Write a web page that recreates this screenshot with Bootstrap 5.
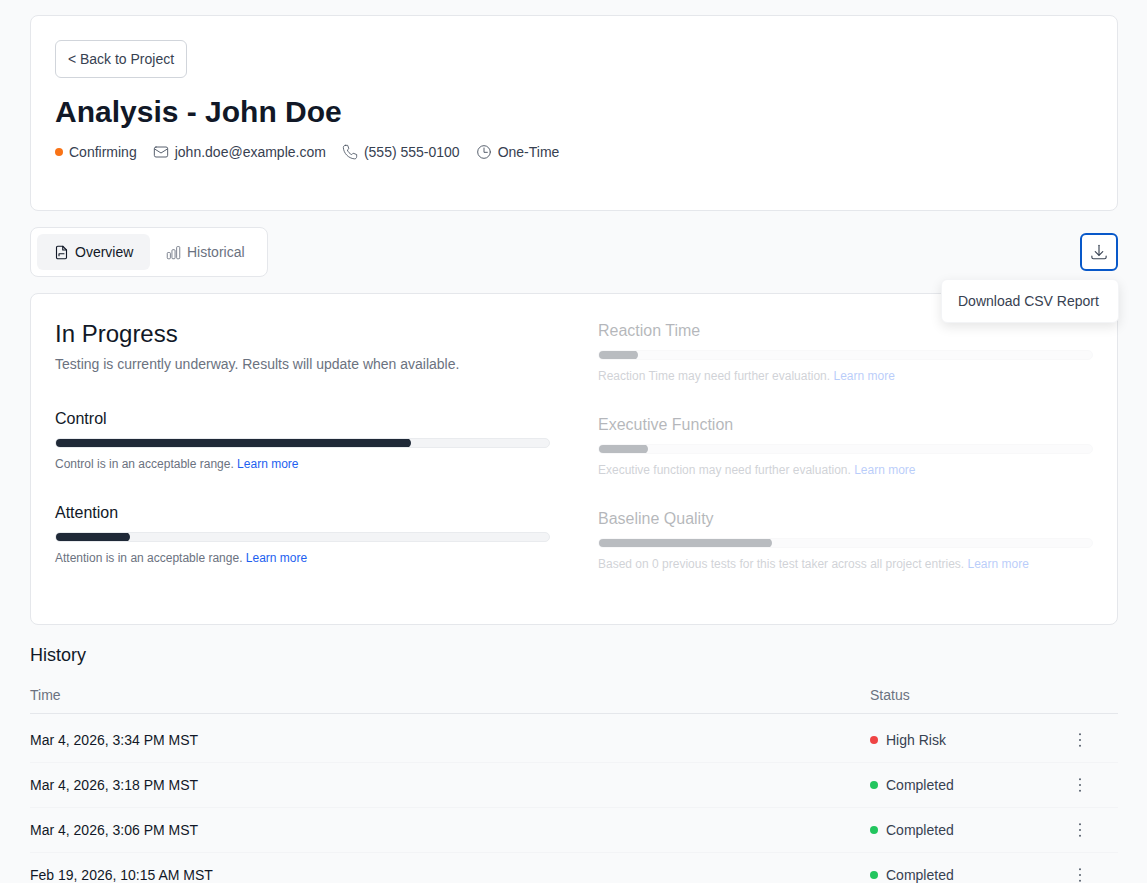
<!DOCTYPE html>
<html lang="en">
<head>
<meta charset="utf-8">
<title>Analysis - John Doe</title>
<link rel="stylesheet" href="https://cdn.jsdelivr.net/npm/bootstrap@5.3.0/dist/css/bootstrap.min.css">
<style>
html,body{height:883px;overflow:hidden}
body{background:#f9fafb;font-family:"Liberation Sans",Arial,sans-serif;color:#111827;font-size:14px}
.pg{padding:15px 29px 0 30px}
.panel{background:#fff;border:1px solid #e5e7eb;border-radius:8px}
.head{height:196px;padding:24px}
.back{display:inline-block;height:38px;width:132px;padding:0;line-height:36px;font-size:14px;color:#374151;border:1px solid #d1d5db;border-radius:6px;background:#fff;text-align:center}
.ttl{font-size:30px;line-height:36px;font-weight:700;color:#111827;margin:16px 0 0}
.meta{margin-top:12px;height:20px;color:#374151;font-size:14px;line-height:20px}
.meta svg{display:block;flex:none}
.pip{width:8px;height:8px;border-radius:50%;flex:none;display:block}
.mgroup{gap:6px}
.tabrow{margin-top:16px;height:50px}
.tabs{height:50px;width:238px;padding:6px;gap:0}
.tabbtn{height:36px;border-radius:6px;display:flex;align-items:center;gap:6px;font-size:14px;color:#6b7280;padding:0 12px 0 17px;border:0;background:none}
.tabbtn.on{background:#f3f4f6;color:#111827;width:113px}
.tabbtn.off{padding-left:16px}
.dlwrap{position:relative;margin-top:6px;height:38px;width:38px}
.dlbtn{width:38px;height:38px;border:2px solid #0858c9;border-radius:6px;background:#fff;padding:0;display:flex;align-items:center;justify-content:center}
.dlmenu{position:absolute;top:46px;right:-1px;width:178px;height:44px;background:#fff;border:1px solid #f3f4f6;border-radius:6px;box-shadow:0 4px 12px rgba(0,0,0,.1);font-size:14px;line-height:42px;padding-left:16px;color:#374151;z-index:5}
.main{margin-top:16px;height:332px;padding:24px;display:grid;grid-template-columns:495px 495px;column-gap:48px}
.st{font-size:24px;line-height:32px;color:#111827;margin:0}
.sub{font-size:14px;line-height:20px;color:#6b7280;margin:4px 0 0}
.met{height:94px}
.mname{font-size:16px;line-height:24px;color:#111827}
.track{height:10px;margin-top:7px;background:#f3f4f6;border:1px solid #e9ebee;border-radius:5px;position:relative;overflow:hidden}
.fill{position:absolute;left:-1px;top:-1px;bottom:-1px;background:#1f2937;border-radius:5px}
.note{font-size:12px;line-height:16px;color:#6b7280;margin-top:8px}
.note a{color:#1d5ff0;text-decoration:none}
.dim{opacity:.31;padding-top:1px}
.lhead{height:89px}
.lh{font-size:18px;line-height:28px;color:#111827;margin:16px 0 0}
.hist{margin-top:7px;width:1088px;font-size:14px}
.hrow{display:grid;grid-template-columns:840px 200px 48px;align-items:center;height:45px;border-bottom:1px solid #f3f4f6}
.hrow.top{height:38px;padding-top:2px;margin-bottom:4px;border-bottom:1px solid #e5e7eb;color:#6b7280}
.stat{color:#374151;gap:8px}
.kebab{display:block}
</style>
</head>
<body>
<div class="pg">
  <div class="panel head">
    <button class="back" type="button">&lt; Back to Project</button>
    <h1 class="ttl">Analysis - John Doe</h1>
    <div class="meta d-flex align-items-center">
      <span class="d-flex align-items-center mgroup"><span class="pip" style="background:#f97316"></span>Confirming</span>
      <span class="d-flex align-items-center mgroup ms-3">
        <svg width="16" height="16" viewBox="0 0 24 24" fill="none" stroke="#4b5563" stroke-width="1.4" stroke-linecap="round" stroke-linejoin="round"><rect x="2" y="4.5" width="20" height="15" rx="2.5"/><path d="M2.5 7.5 12 13.5l9.500-6"/></svg>john.doe@example.com</span>
      <span class="d-flex align-items-center mgroup ms-3">
        <svg width="16" height="16" viewBox="0 0 24 24" fill="none" stroke="#4b5563" stroke-width="1.3" stroke-linecap="round" stroke-linejoin="round"><path d="M5 2h3.500l1.800 5-2.300 2c1.200 3 3.400 5.400 6.500 7l2.200-2.200 5.300 2v3.200c0 2-1.500 3.500-3.500 3.300C9.500 21.300 2.700 14 2 5.500 1.900 3.500 3.200 2 5 2z"/></svg>(555) 555-0100</span>
      <span class="d-flex align-items-center mgroup ms-3">
        <svg width="16" height="16" viewBox="0 0 24 24" fill="none" stroke="#4b5563" stroke-width="1.4" stroke-linecap="round" stroke-linejoin="round"><circle cx="12" cy="12" r="9.500"/><path d="M12 6v6.500h5"/></svg>One-Time</span>
    </div>
  </div>

  <div class="tabrow d-flex justify-content-between">
    <div class="panel tabs d-flex">
      <button class="tabbtn on" type="button">
        <svg width="15" height="15" viewBox="0 0 24 24" fill="none" stroke="#111827" stroke-width="1.800" stroke-linecap="round" stroke-linejoin="round"><path d="M6 2h8l6 6v12a2 2 0 0 1-2 2H6a2 2 0 0 1-2-2V4a2 2 0 0 1 2-2z"/><path d="M14 2v6h6"/><path d="M8 17v-3h4M8 14h8"/></svg>Overview</button>
      <button class="tabbtn off" type="button">
        <svg width="15" height="15" viewBox="0 0 24 24" fill="none" stroke="#6b7280" stroke-width="1.400" stroke-linejoin="round"><rect x="2" y="12" width="5" height="10" rx="1.500"/><rect x="9.500" y="7.500" width="5" height="14.500" rx="1.500"/><rect x="17" y="2.500" width="5" height="19.500" rx="1.500"/></svg>Historical</button>
    </div>
    <div class="dlwrap">
      <button class="dlbtn" type="button" aria-label="Download">
        <svg width="18" height="18" viewBox="0 0 24 24" fill="none" stroke="#374151" stroke-width="1.500" stroke-linecap="round" stroke-linejoin="round"><path d="M12 3v13"/><path d="M7 11.500 12 16.500 17 11.500"/><path d="M2.500 17.500v1.500a2 2 0 0 0 2 2h15a2 2 0 0 0 2-2v-1.500"/></svg>
      </button>
      <div class="dlmenu">Download CSV Report</div>
    </div>
  </div>

  <div class="panel main">
    <div>
      <div class="lhead">
        <h2 class="st">In Progress</h2>
        <p class="sub">Testing is currently underway. Results will update when available.</p>
      </div>
      <div class="met"><div class="mname">Control</div><div class="track"><div class="fill" style="width:72.2%"></div></div><div class="note">Control is in an acceptable range. <a href="#">Learn more</a></div></div>
      <div class="met"><div class="mname">Attention</div><div class="track"><div class="fill" style="width:15.2%"></div></div><div class="note">Attention is in an acceptable range. <a href="#">Learn more</a></div></div>
    </div>
    <div class="dim">
      <div class="met"><div class="mname">Reaction Time</div><div class="track"><div class="fill" style="width:8.2%"></div></div><div class="note">Reaction Time may need further evaluation. <a href="#">Learn more</a></div></div>
      <div class="met"><div class="mname">Executive Function</div><div class="track"><div class="fill" style="width:10.2%"></div></div><div class="note">Executive function may need further evaluation. <a href="#">Learn more</a></div></div>
      <div class="met"><div class="mname">Baseline Quality</div><div class="track"><div class="fill" style="width:35.2%"></div></div><div class="note">Based on 0 previous tests for this test taker across all project entries. <a href="#">Learn more</a></div></div>
    </div>
  </div>

  <h3 class="lh fw-normal">History</h3>
  <div class="hist">
    <div class="hrow top"><span>Time</span><span>Status</span><span></span></div>
    <div class="hrow"><span>Mar 4, 2026, 3:34 PM MST</span><span class="d-flex align-items-center stat"><span class="pip" style="background:#ef4444"></span>High Risk</span><svg class="kebab" width="20" height="16" viewBox="0 0 20 16" fill="#4b5563"><circle cx="10" cy="2.200" r=".95"/><circle cx="10" cy="8" r=".95"/><circle cx="10" cy="13.800" r=".95"/></svg></div>
    <div class="hrow"><span>Mar 4, 2026, 3:18 PM MST</span><span class="d-flex align-items-center stat"><span class="pip" style="background:#22c55e"></span>Completed</span><svg class="kebab" width="20" height="16" viewBox="0 0 20 16" fill="#4b5563"><circle cx="10" cy="2.200" r=".95"/><circle cx="10" cy="8" r=".95"/><circle cx="10" cy="13.800" r=".95"/></svg></div>
    <div class="hrow"><span>Mar 4, 2026, 3:06 PM MST</span><span class="d-flex align-items-center stat"><span class="pip" style="background:#22c55e"></span>Completed</span><svg class="kebab" width="20" height="16" viewBox="0 0 20 16" fill="#4b5563"><circle cx="10" cy="2.200" r=".95"/><circle cx="10" cy="8" r=".95"/><circle cx="10" cy="13.800" r=".95"/></svg></div>
    <div class="hrow"><span>Feb 19, 2026, 10:15 AM MST</span><span class="d-flex align-items-center stat"><span class="pip" style="background:#22c55e"></span>Completed</span><svg class="kebab" width="20" height="16" viewBox="0 0 20 16" fill="#4b5563"><circle cx="10" cy="2.200" r=".95"/><circle cx="10" cy="8" r=".95"/><circle cx="10" cy="13.800" r=".95"/></svg></div>
  </div>
</div>
<script src="https://cdn.jsdelivr.net/npm/bootstrap@5.3.0/dist/js/bootstrap.bundle.min.js"></script>
</body>
</html>
